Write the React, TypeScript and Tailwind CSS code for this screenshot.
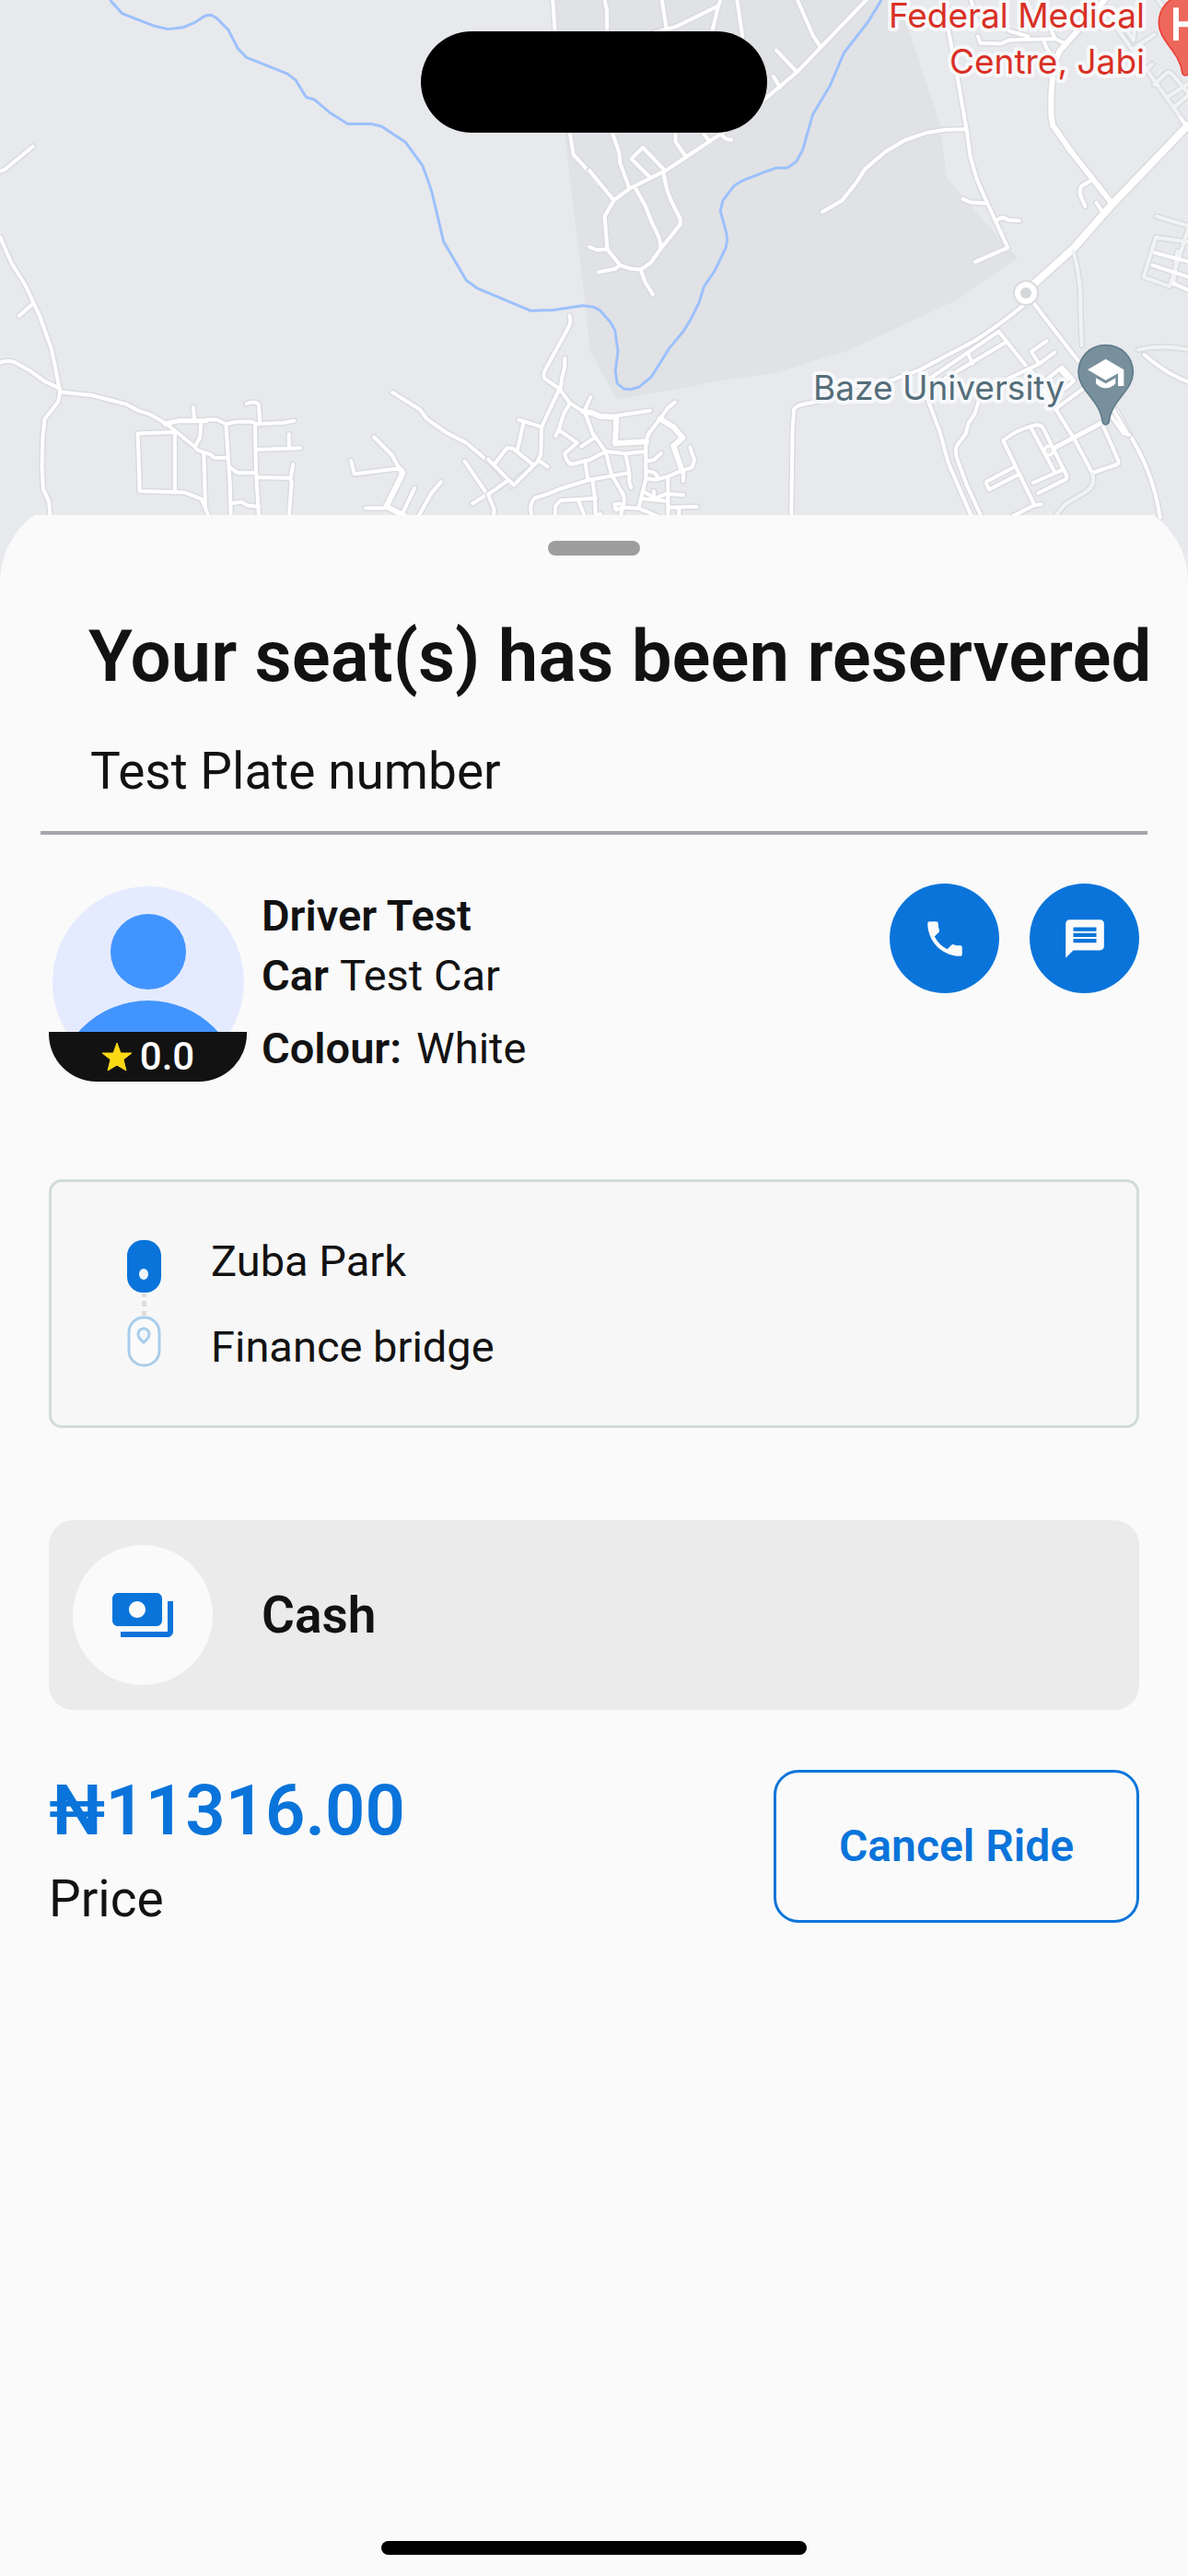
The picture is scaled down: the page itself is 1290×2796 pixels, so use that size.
import { MdMessage, MdPayments, MdPhone } from "react-icons/md";

type Road = { d: string; w?: number; faint?: boolean };

const westRoads: Road[] = [
  { d: "M0 470L12 466L86 402" },
  { d: "M0 650L30 722L66 782L88 832L104 868L134 955L146 1015L157 1076L153 1102L117 1150L112 1200L110 1280L113 1342L128 1376L132 1420" },
  { d: "M88 832L50 867" },
  { d: "M0 995Q22 988 38 994L82 1020L116 1046L157 1067" },
  { d: "M157 1076L240 1085L332 1110L362 1127L392 1137L434 1162L508 1224L518 1236L552 1248L562 1257L596 1257" },
  { d: "M432 1164L468 1155L540 1155", w: 5 },
  { d: "M540 1152L568 1152L592 1164L620 1158L660 1158L672 1164L745 1160L770 1155" },
  { d: "M510 1155L506 1118M646 1108Q676 1098 678 1114L681 1162" },
  { d: "M527 1158L524 1200L514 1220" },
  { d: "M458 1186L361 1190L366 1348L484 1352L528 1370L548 1420M458 1190L458 1348M534 1246L538 1392" },
  { d: "M592 1164L598 1260L602 1320L605 1420M668 1164L671 1300L678 1420" },
  { d: "M672 1234L786 1230M757 1230L757 1192M676 1311L758 1312L764 1322L757 1420M762 1310L768 1275" },
  { d: "M604 1284L622 1298L670 1298M604 1382L632 1378L650 1388L678 1391" },
  { d: "M920 1265L928 1301L1044 1286M980 1200L1026 1248L1044 1282" },
  { d: "M1044 1286Q1058 1294 1052 1306L1012 1390L1060 1416", w: 6 },
  { d: "M958 1395L1010 1395M1054 1410L1086 1340M1095 1420L1130 1354L1155 1323" },
  { d: "M1028 1077L1100 1124L1118 1150L1170 1188L1222 1216L1292 1278L1340 1334L1360 1310L1400 1278L1412 1256" },
  { d: "M1217 1266L1280 1362L1295 1402L1292 1420M1238 1382L1328 1324" },
  { d: "M1448 0L1454 90M1493 365L1502 424L1530 456L1568 508" },
  { d: "M1546 679L1568 686" },
];

const northEastRoads: Road[] = [
  { d: "M40 0L46 30L46 88M190 0L202 80L225 74L338 16L343 0M338 16L322 84M387 0L401 100M168 90L202 80" },
  { d: "M725 0L606 130L544 198L455 276M545 0L586 98L606 130M490 138L544 198M482 210L500 240" },
  { d: "M370 350L315 388L200 468L105 518L64 550L40 594L47 684L80 728L110 738L134 740L160 722L186 684" },
  { d: "M60 365L78 418L80 446L105 518M225 360L226 390L254 432M300 368L315 388M346 370Q356 384 372 384" },
  { d: "M160 488L110 436L140 405L196 466M194 476L204 524L218 560L238 600L238 616L186 684Q190 660 164 612L146 564L122 520" },
  { d: "M0 468L64 550M0 678L20 686L47 684M80 728L68 738L24 747M134 740L146 774L166 808" },
  { d: "M610 582L662 550L700 500L722 464L776 416L828 384L885 364L935 356L988 355" },
  { d: "M925 0L962 200L988 355L998 430L1014 490L1040 552L1096 680L1010 719" },
  { d: "M1040 558L998 555L978 546M1064 608Q1080 590 1098 604L1126 606" },
  { d: "M1000 0L1016 70M1018 100L1024 118L1078 120L1100 110L1220 106L1246 120M1100 85L1150 100M1190 110Q1195 130 1206 145M1200 60L1220 106" },
  { d: "M1350 0L1232 140Q1206 200 1210 320L1214 344L1262 416L1370 560", w: 6 },
  { d: "M1568 344L1370 560L1270 680L1160 784", w: 8 },
  { d: "M1314 496L1290 510Q1280 525 1290 546L1299 566M1328 556L1348 588" },
  { d: "M1548 322L1560 340" },
  { d: "M1370 60L1546 318M1400 70L1425 110L1430 60M1430 130L1480 95M1460 190L1474 176M1480 232L1512 200Q1522 196 1532 210L1568 254M1512 268L1568 230M1530 296L1568 262M1490 0L1510 30", faint: true },
  { d: "M1486 594L1568 620M1568 664L1484 652L1452 760L1520 786L1568 630M1540 690L1530 780", faint: true },
  { d: "M1482 694L1568 718M1475 728L1568 760M1530 778L1568 796" },
  { d: "M1268 690Q1290 780 1286 840L1290 948M1438 960Q1500 945 1568 960", faint: true },
  { d: "M1454 974Q1510 1026 1568 1048" },
  { d: "M1144 832Q1080 888 1010 935L866 1015L740 1064L640 1092L550 1112L536 1122L532 1180L529 1420" },
  { d: "M1160 826L1190 868L1280 990M1380 1125L1440 1240Q1480 1320 1495 1420" },
  { d: "M890 1040L1072 910L1150 1012M930 1040L1090 940M994 975L1004 998" },
  { d: "M880 1080L918 1185L940 1270L1000 1416M1020 1100L1010 1135L994 1160L985 1192L962 1224Q956 1240 966 1268L988 1330L1024 1412" },
];

const campusRoads: Road[] = [
  { d: "M290 0L240 35L265 75L160 125M265 75L315 38M235 95L265 125M290 125L340 85L378 130L350 155M335 95L360 125" },
  { d: "M318 222L405 158M280 160L380 320L438 430L520 402Q526 398 522 388L475 280" },
  { d: "M318 347L478 262", w: 5 },
  { d: "M500 245L540 300L558 306M508 226L550 298" },
  { d: "M148 325Q190 290 240 278Q268 268 278 284L355 440Q356 450 350 452L262 496M148 325L250 535L180 570M250 535L272 532" },
  { d: "M240 286L264 330L312 420M245 462L345 418M185 410L94 458Q90 464 103 484L200 434" },
  { d: "M438 432Q450 470 420 490L350 532L318 570", faint: true },
];

const villageRoads: Road[] = [
  { d: "M265 38Q272 55 262 76L187 212Q178 232 184 242L232 276L266 322L310 350M250 177L250 202L240 244L236 276" },
  { d: "M232 278L190 366L174 402L172 490L160 514L84 590L0 505M100 377L174 400M116 384L96 474M166 510L194 530" },
  { d: "M20 522L62 468L80 470L148 524M60 578L0 620L20 670L18 690" },
  { d: "M266 324L246 358L230 410L220 430M230 410L290 452L250 486Q252 510 270 522L330 508L384 480" },
  { d: "M334 303L314 348L340 420L384 482L402 556L440 620L444 640L432 690M346 436L304 464" },
  { d: "M310 350L338 354L366 366L418 368L414 454L516 448", w: 6 },
  { d: "M418 364L528 347M608 320L586 338L560 374L522 424L514 450L514 570L490 665" },
  { d: "M560 374L604 400L634 436L604 462L632 542", w: 6 },
  { d: "M658 466L672 508L664 532L632 542L584 562L548 572L514 568M636 545L636 576M516 512L540 508L564 486" },
  { d: "M382 480L448 487L514 480M448 487L460 550L460 580L466 598M316 510L324 568" },
  { d: "M460 550L402 560L324 574L240 600L190 620L152 632Q132 650 142 690" },
  { d: "M340 574L348 630L350 690M218 690L220 656L236 640L350 632M294 640L314 690" },
  { d: "M516 546Q546 542 554 568M508 612L546 632L582 618L636 622M502 634L588 642M540 610L540 630M586 564L586 690" },
  { d: "M430 650L412 652L416 670L440 662L490 665L550 690M590 662L680 660M622 662L622 690M350 690L366 684" },
];

function Roads({ roads, transform }: { roads: Road[]; transform: string }) {
  return (
    <g transform={transform} fill="none" strokeLinecap="round" strokeLinejoin="round">
      {roads.map((r) => (
        <path key={r.d} d={r.d} stroke="#d9dbdf" strokeWidth={(r.w ?? 4) + 3} vectorEffect="non-scaling-stroke" />
      ))}
      {roads.map((r) => (
        <path
          key={r.d}
          d={r.d}
          stroke={r.faint ? "#f1f2f4" : "#ffffff"}
          strokeWidth={r.w ?? 4}
          vectorEffect="non-scaling-stroke"
        />
      ))}
    </g>
  );
}

const WEST = "scale(0.4145 0.3954)";
const EAST = "translate(640 0) scale(0.4145 0.3954)";

function RideMap() {
  return (
    <svg
      className="absolute inset-x-0 top-0 h-[640px] w-full"
      viewBox="0 0 1290 640"
      preserveAspectRatio="xMidYMin slice"
      role="img"
      aria-label="Map"
    >
      <rect width="1290" height="640" fill="#e8e9ed" />
      <path
        d="M597 0L616 170L635 328L641 382L670 434L773 415L845 404L922 380L1038 326L1105 280L1055 225L1028 193L1021 136L988 36L975 0Z"
        fill="#e1e2e6"
      />
      <Roads roads={westRoads} transform={WEST} />
      <Roads roads={northEastRoads} transform={EAST} />
      <Roads roads={villageRoads} transform="translate(530 330) scale(0.3333)" />
      <Roads roads={campusRoads} transform="translate(1040 370) scale(0.3333)" />
      <circle cx="1114" cy="318" r="10" fill="none" stroke="#d9dbdf" strokeWidth="8" />
      <circle cx="1114" cy="318" r="9" fill="#d4d6da" stroke="#ffffff" strokeWidth="6" />
      <circle cx="1139" cy="489" r="5" fill="#e8e9ed" stroke="#ffffff" strokeWidth="3" />
      <path
        transform={WEST}
        vectorEffect="non-scaling-stroke"
        fill="none"
        stroke="#9cc1fb"
        strokeWidth="3"
        strokeLinejoin="round"
        d="M288 0L320 37L400 70L440 80L480 75L508 63L538 43L553 41L568 50L598 82L623 133L646 158L752 202L774 219L802 267L823 273L865 310L911 340L973 340L1000 347L1062 390L1107 455Q1125 505 1132 530L1162 663L1222 770L1250 791L1391 853L1450 851L1526 839L1556 843L1572 852L1600 886L1611 907L1619 965L1612 1018L1617 1053L1634 1067L1651 1069L1673 1063L1706 1035L1754 955L1790 910L1809 878L1832 829L1844 787L1872 744L1901 681L1905 660L1903 640L1887 578L1894 550L1923 510L1943 497L2003 472L2034 461L2062 461L2086 444L2103 411L2129 315L2174 236L2211 145L2274 60L2309 0"
      />
      <g
        fontFamily="Inter, sans-serif"
        fontSize="37"
        textAnchor="end"
        stroke="#f7f8fa"
        strokeWidth="8"
        strokeLinejoin="round"
        paintOrder="stroke"
      >
        <text x="1243" y="30" fill="#d93025">Federal Medical</text>
        <text x="1243" y="80" fill="#d93025">Centre, Jabi</text>
        <text x="1156" y="434" fill="#546e7a">Baze University</text>
      </g>
      <g transform="translate(1040 370) scale(0.3333)">
        <path
          d="M482 14C533 14 571 52 571 103C571 163 500 190 492 266Q482 280 472 266C464 190 393 163 393 103C393 52 431 14 482 14Z"
          fill="#78909c"
          stroke="#607d8b"
          strokeWidth="5"
        />
        <path d="M482 59L541 94V147H522V106L482 128L423 94Z" fill="#ffffff" />
        <path d="M450 121L482 139L514 121V139Q500 154 482 154Q464 154 450 139Z" fill="#ffffff" />
      </g>
      <g transform="translate(1040 0) scale(0.3333)">
        <path
          d="M742 -14C793 -14 831 24 831 75C831 135 760 166 752 240Q742 252 732 240C724 166 655 135 655 75C655 24 691 -14 742 -14Z"
          fill="#ee675c"
          stroke="#ea4335"
          strokeWidth="5"
        />
        <path d="M711 25V132M773 25V132M711 79H773" stroke="#ffffff" strokeWidth="18" fill="none" />
      </g>
    </svg>
  );
}

function Avatar() {
  return (
    <svg viewBox="0 0 208 208" className="h-[208px] w-[208px]" role="img" aria-label="Driver photo">
      <clipPath id="avatar-clip">
        <circle cx="104" cy="104" r="104" />
      </clipPath>
      <g clipPath="url(#avatar-clip)">
        <rect width="208" height="208" fill="#e5ebff" />
        <circle cx="104" cy="71" r="41" fill="#4294ff" />
        <circle cx="104" cy="226" r="102" fill="#4294ff" />
      </g>
    </svg>
  );
}

function RouteMarkers() {
  return (
    <svg viewBox="0 0 37 138" className="h-[138px] w-[37px] shrink-0" aria-hidden="true">
      <rect width="37" height="57" rx="17" fill="#0a74da" />
      <ellipse cx="18" cy="37" rx="5" ry="6" fill="#eef5fc" />
      <g fill="#dcdcde">
        <rect x="16" y="58" width="5" height="4" />
        <rect x="16" y="66" width="5" height="6" />
        <rect x="16" y="77" width="5" height="5" />
      </g>
      <rect x="2" y="84" width="33" height="52" rx="16" fill="#fafafa" stroke="#a9cdeb" strokeWidth="3" />
      <path
        d="M18 111C14 108 12 106 12 102A6 6 0 0 1 24 102C24 106 22 108 18 111Z"
        fill="#f4f8fc"
        stroke="#a9cdeb"
        strokeWidth="3"
      />
    </svg>
  );
}

export default function App() {
  return (
    <div className="relative flex min-h-screen flex-col overflow-x-hidden bg-[#fafafa] font-['Roboto',sans-serif] text-[#121212]">
      <RideMap />
      <div className="relative flex h-[559px] shrink-0 items-start justify-center pt-[34px]">
        <div className="h-[110px] w-[376px] rounded-full bg-black" />
      </div>

      <div className="relative flex grow flex-col overflow-hidden">
        <main className="-mt-[17px] flex grow flex-col rounded-t-[90px] bg-[#fafafa] pt-[45px]">
          <div className="h-4 w-[100px] self-center rounded-full bg-[#9e9e9e]" />

          <h1 className="mt-[62px] pl-24 text-[78px] leading-[96px] font-semibold whitespace-nowrap">
            Your seat(s) has been reservered
          </h1>
          <p className="mt-11 pl-[98px] text-[55px] leading-[64px]">Test Plate number</p>
          <hr className="mx-[44px] mt-[33px] h-1 border-0 bg-[#a4a6ad]" />

          <section className="mx-[53px] mt-[53px] flex items-start">
            <div className="relative flex h-[215px] w-[215px] shrink-0 justify-center pt-[3px]">
              <Avatar />
              <div className="absolute inset-x-0 bottom-0 flex h-[54px] items-center justify-center gap-2 rounded-b-[52px] bg-[#121212] text-[42px] leading-[50px] font-medium text-white">
                <svg viewBox="0 0 34 33" className="h-[33px] w-[34px]" aria-hidden="true">
                  <path
                    d="M17 1L21 12H33L24 19L27 31L17 25L7 31L10 19L1 12H13Z"
                    fill="#fdd915"
                    stroke="#fdd915"
                    strokeLinejoin="round"
                  />
                </svg>
                <span>0.0</span>
              </div>
            </div>
            <div className="grow pt-[7px] pl-4 text-[47px] leading-[56px]">
              <p className="font-semibold">Driver Test</p>
              <p className="mt-[9px] flex gap-3">
                <span className="font-semibold">Car</span>
                <span>Test Car</span>
              </p>
              <p className="mt-[23px] flex gap-4">
                <span className="font-semibold">Colour:</span>
                <span>White</span>
              </p>
            </div>
            <div className="flex gap-[33px] text-[50px] text-[#fafafa]">
              <button type="button" aria-label="Call driver" className="grid size-[119px] place-items-center rounded-full bg-[#0a74da]">
                <MdPhone />
              </button>
              <button type="button" aria-label="Message driver" className="grid size-[119px] place-items-center rounded-full bg-[#0a74da]">
                <MdMessage />
              </button>
            </div>
          </section>

          <section className="mx-[53px] mt-[106px] flex items-center gap-[54px] rounded-[14px] border-3 border-[#d1dcd9] bg-[#f7f7f7] px-[82px] py-[58px]">
            <RouteMarkers />
            <div className="flex flex-col gap-[38px] text-[47px] leading-[55px]">
              <p>Zuba Park</p>
              <p>Finance bridge</p>
            </div>
          </section>

          <section className="mx-[53px] mt-[100px] flex items-center gap-[53px] rounded-[27px] bg-[#ebebeb] px-[26px] py-[27px]">
            <div className="grid size-[152px] place-items-center rounded-full bg-[#fafafa] text-[72px] text-[#0a74da]">
              <MdPayments />
            </div>
            <p className="text-[55px] leading-[64px] font-semibold">Cash</p>
          </section>

          <section className="mx-[53px] mt-[65px] flex items-start justify-between">
            <div>
              <p className="text-[76px] leading-[88px] font-semibold text-[#0a74da]">₦11316.00</p>
              <p className="mt-[22px] text-[55px] leading-[60px]">Price</p>
            </div>
            <button
              type="button"
              className="h-[166px] rounded-[27px] border-3 border-[#0a74da] px-[68px] text-[48px] leading-[56px] font-semibold text-[#0a74da]"
            >
              Cancel Ride
            </button>
          </section>

          <div className="mt-auto mb-[23px] h-[15px] w-[462px] self-center rounded-full bg-black" />
        </main>
      </div>
    </div>
  );
}
